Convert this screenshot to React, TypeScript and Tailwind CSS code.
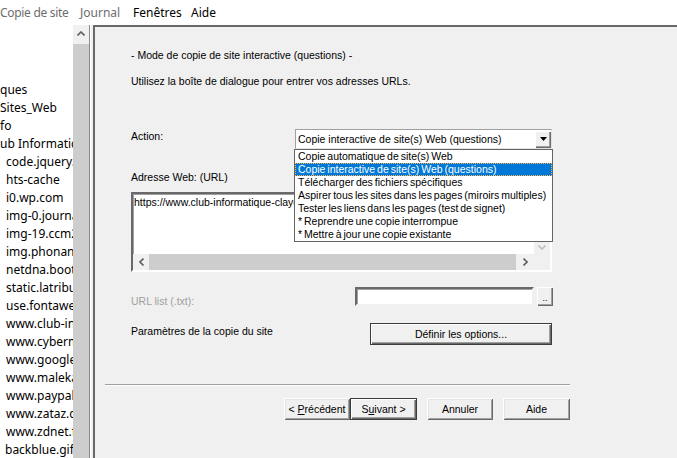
import React from "react";

const treeRows: { text: string; indent: number }[] = [
  { text: "", indent: 0 },
  { text: "", indent: 0 },
  { text: "", indent: 0 },
  { text: "ques", indent: 0 },
  { text: "Sites_Web", indent: 0 },
  { text: "fo", indent: 0 },
  { text: "ub Informatique", indent: 0 },
  { text: "code.jquery.com", indent: 6 },
  { text: "hts-cache", indent: 6 },
  { text: "i0.wp.com", indent: 6 },
  { text: "img-0.journaldunet.com", indent: 6 },
  { text: "img-19.ccm2.net", indent: 6 },
  { text: "img.phonandroid.com", indent: 6 },
  { text: "netdna.bootstrapcdn.com", indent: 6 },
  { text: "static.latribune.fr", indent: 6 },
  { text: "use.fontawesome.com", indent: 6 },
  { text: "www.club-informatique", indent: 6 },
  { text: "www.cybermalveillance", indent: 6 },
  { text: "www.google.com", indent: 6 },
  { text: "www.malekal.com", indent: 6 },
  { text: "www.paypalobjects.com", indent: 6 },
  { text: "www.zataz.com", indent: 6 },
  { text: "www.zdnet.fr", indent: 6 },
  { text: "backblue.gif", indent: 5 },
];

const actions = [
  "Copie automatique de site(s) Web",
  "Copie interactive de site(s) Web (questions)",
  "Télécharger des fichiers spécifiques",
  "Aspirer tous les sites dans les pages (miroirs multiples)",
  "Tester les liens dans les pages (test de signet)",
  "* Reprendre une copie interrompue",
  "* Mettre à jour une copie existante",
];

function ClassicButton({
  children,
  width,
  isDefault = false,
}: {
  children: React.ReactNode;
  width: string;
  isDefault?: boolean;
}) {
  return (
    <div
      className={
        isDefault
          ? `${width} h-[22px] flex items-center justify-center bg-[#f0f0f0] border border-[#3c3c3c] shadow-[inset_1px_1px_#ffffff,inset_-1px_-1px_#696969,inset_-2px_-2px_#a0a0a0] text-black`
          : `${width} h-[22px] flex items-center justify-center bg-[#f0f0f0] shadow-[inset_1px_1px_#ffffff,inset_-1px_-1px_#696969,inset_2px_2px_#e3e3e3,inset_-2px_-2px_#a0a0a0] text-black`
      }
    >
      <span className="whitespace-pre">{children}</span>
    </div>
  );
}

export default function App() {
  return (
    <div className="w-[677px] h-[458px] overflow-hidden bg-white flex flex-col">
      {/* menu bar */}
      <div className="h-[25px] shrink-0 flex items-center text-[12px] font-['Noto_Sans',sans-serif] whitespace-nowrap">
        <span className="w-[80px] text-[#6d6d6d] tracking-[-0.3px]">Copie de site</span>
        <span className="w-[53px] text-[#6d6d6d]">Journal</span>
        <span className="w-[58px] text-black">Fenêtres</span>
        <span className="text-black">Aide</span>
      </div>

      <div className="flex flex-1 min-h-0">
        {/* directory tree */}
        <div className="w-[73px] shrink-0 overflow-hidden bg-white pt-[2px] font-['Noto_Sans',sans-serif] text-[12px] text-black">
          {treeRows.map((r, i) => (
            <div
              key={i}
              className="h-[18px] leading-[18px] whitespace-nowrap"
              style={{ paddingLeft: r.indent }}
            >
              {r.text}
            </div>
          ))}
        </div>

        {/* tree scrollbar */}
        <div className="w-[16px] shrink-0 bg-[#f0f0f0] flex flex-col">
          <div className="h-[17px] flex items-center justify-center">
            <svg width="8" height="5" viewBox="0 0 8 5">
              <polyline points="0.5,4.5 4,1 7.5,4.5" fill="none" stroke="#606060" strokeWidth="1.6" />
            </svg>
          </div>
          <div className="mt-[2px] flex-1 bg-[#cdcdcd]" />
        </div>

        {/* splitter */}
        <div className="w-[1px] shrink-0 bg-[#8a8a8a]" />
        <div className="w-[3px] shrink-0 bg-[#f0f0f0] border-l border-white" />

        {/* wizard page */}
        <div className="flex-1 bg-[#f0f0f0] border-t-2 border-l-2 border-t-[#696969] border-l-[#696969] font-['Liberation_Sans',Arial,sans-serif] text-[10.5px] leading-[13px] text-black">
          <div className="pl-[36px] flex flex-col">
            <div className="mt-[22px]">- Mode de copie de site interactive (questions) -</div>
            <div className="mt-[13px]">Utilisez la boîte de dialogue pour entrer vos adresses URLs.</div>

            {/* action selector */}
            <div className="mt-[41px] flex items-start">
              <div className="w-[164px] pt-[1px]">Action:</div>
              <div className="relative w-[257px] h-[20px] bg-white border border-t-[#a0a0a0] border-l-[#a0a0a0] border-b-[#e3e3e3] border-r-[#e3e3e3] flex items-center">
                <span className="pl-[2px] flex-1 whitespace-nowrap">Copie interactive de site(s) Web (questions)</span>
                <div className="w-[16px] h-[17px] bg-[#f0f0f0] shadow-[inset_1px_1px_#ffffff,inset_-1px_-1px_#696969,inset_-2px_-2px_#a0a0a0] flex items-center justify-center">
                  <svg width="7" height="4" viewBox="0 0 7 4">
                    <polygon points="0,0 7,0 3.5,4" fill="#000" />
                  </svg>
                </div>

                {/* open list */}
                <div className="absolute left-[-2px] top-[19px] w-[259px] z-10 bg-white border border-[#646464] [word-spacing:-1px]">
                  {actions.map((a, i) => (
                    <div
                      key={a}
                      className={
                        i === 1
                          ? "h-[13px] leading-[11px] pl-[2px] whitespace-nowrap bg-[#0078d7] text-white border border-dotted border-[#ffb24d]"
                          : "h-[13px] leading-[13px] pl-[3px] whitespace-nowrap"
                      }
                    >
                      {a}
                    </div>
                  ))}
                </div>
              </div>
            </div>

            <div className="mt-[22px]">Adresse Web: (URL)</div>

            {/* url box */}
            <div className="mt-[8px] w-[421px] h-[80px] bg-white border-2 border-t-[#696969] border-l-[#696969] border-b-white border-r-white shadow-[inset_1px_1px_#a0a0a0] flex flex-col">
              <div className="flex flex-1 min-h-0">
                <div className="flex-1 pl-[1px] pt-[2px] overflow-hidden whitespace-nowrap">
                  https://www.club-informatique-clayes-sous-bois.fr/
                </div>
                <div className="w-[16px] bg-[#f0f0f0] flex flex-col justify-end items-center pb-[4px]">
                  <svg width="8" height="5" viewBox="0 0 8 5">
                    <polyline points="0.5,0.5 4,4 7.5,0.5" fill="none" stroke="#c0c0c0" strokeWidth="1.6" />
                  </svg>
                </div>
              </div>
              <div className="h-[16px] flex bg-[#f0f0f0]">
                <div className="w-[16px] flex items-center justify-center">
                  <svg width="5" height="8" viewBox="0 0 5 8">
                    <polyline points="4.5,0.5 1,4 4.5,7.5" fill="none" stroke="#606060" strokeWidth="1.6" />
                  </svg>
                </div>
                <div className="flex-1 bg-[#cdcdcd]" />
                <div className="w-[18px] flex items-center justify-center">
                  <svg width="5" height="8" viewBox="0 0 5 8">
                    <polyline points="0.5,0.5 4,4 0.5,7.5" fill="none" stroke="#606060" strokeWidth="1.6" />
                  </svg>
                </div>
                <div className="w-[16px] bg-[#f0f0f0]" />
              </div>
            </div>

            {/* url list file */}
            <div className="mt-[15px] flex items-start">
              <div className="w-[224px] pt-[8px] text-[#a0a0a0]">URL list (.txt):</div>
              <div className="w-[179px] h-[19px] bg-white border-2 border-t-[#696969] border-l-[#696969] border-b-[#f0f0f0] border-r-[#f0f0f0] shadow-[inset_1px_1px_#a0a0a0]" />
              <div className="ml-[3px] w-[16px] h-[19px] bg-[#f0f0f0] shadow-[inset_1px_1px_#ffffff,inset_-1px_-1px_#696969,inset_-2px_-2px_#a0a0a0] flex items-end justify-center pb-[3px] text-[9px] leading-[9px]">
                ..
              </div>
            </div>

            {/* options */}
            <div className="mt-[15px] flex items-start">
              <div className="w-[239px] pt-[2px]">Paramètres de la copie du site</div>
              <ClassicButton width="w-[182px]" isDefault>
                Définir les options...
              </ClassicButton>
            </div>
          </div>

          {/* navigation */}
          <div className="ml-[10px] w-[465px] flex flex-col">
            <div className="mt-[39px] h-[2px] border-t border-[#a0a0a0] border-b border-b-white" />
            <div className="mt-[12px] flex justify-end">
              <ClassicButton width="w-[66px]">
                {"< "}
                <u>P</u>récédent
              </ClassicButton>
              <ClassicButton width="w-[67px]" isDefault>
                S<u>u</u>ivant {">"}
              </ClassicButton>
              <div className="ml-[10px]">
                <ClassicButton width="w-[66px]">Annuler</ClassicButton>
              </div>
              <div className="ml-[10px]">
                <ClassicButton width="w-[67px]">Aide</ClassicButton>
              </div>
            </div>
          </div>
        </div>
      </div>
    </div>
  );
}
